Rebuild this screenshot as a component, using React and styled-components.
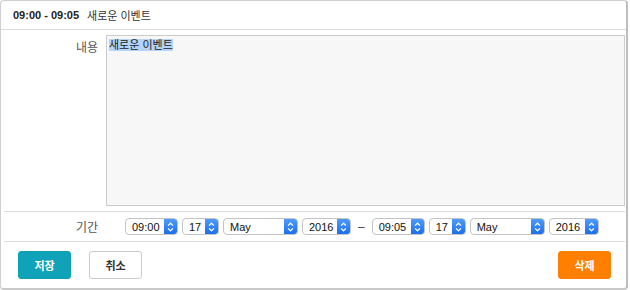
import React from "react";
import styled, { createGlobalStyle } from "styled-components";

const Global = createGlobalStyle`
  html, body { margin: 0; padding: 0; background: #fff; }
  body { font-family: "Liberation Sans", "Noto Sans CJK KR", Arial, sans-serif; }
`;

const Dialog = styled.div`
  box-sizing: border-box;
  width: 628px;
  height: 290px;
  border: 1px solid #cfcfcf;
  border-right: 2px solid #bdbdbd;
  border-bottom: 2px solid #c9c9c9;
  border-radius: 4px;
  background: #fff;
  display: flex;
  flex-direction: column;
  color: #222;
`;

const Header = styled.div`
  height: 28px;
  flex: none;
  display: flex;
  align-items: center;
  gap: 8px;
  padding-left: 12px;
  border-bottom: 1px solid #dcdcdc;
  font-size: 11px;
`;

const Time = styled.span`
  font-weight: bold;
  color: #222;
`;

const Title = styled.span`
  color: #333;
`;

const Row = styled.div`
  display: grid;
  grid-template-columns: 97px 1fr;
  column-gap: 8px;
  align-items: ${(p) => (p.$top ? "start" : "center")};
  padding: ${(p) => p.$pad};
  height: ${(p) => (p.$h ? `${p.$h}px` : "auto")};
`;

const Label = styled.div`
  text-align: right;
  font-size: 12px;
  color: #555;
  padding-top: ${(p) => p.$pt || "0"};
`;

const TextBox = styled.div`
  box-sizing: border-box;
  height: 171px;
  margin-right: 1px;
  background: #f7f7f7;
  border: 1px solid #cbcbcb;
  padding: 3px 2px;
  font-size: 11px;
  line-height: 13px;
`;

const Selected = styled.span`
  background: #b3d4fd;
  color: #222;
`;

const Divider = styled.div`
  height: 1px;
  background: #dcdcdc;
  margin: 0 1px 0 3px;
`;

const Controls = styled.div`
  display: flex;
  align-items: center;
  gap: 4px;
  padding-left: 19px;
`;

const SelectBox = styled.div`
  box-sizing: border-box;
  width: ${(p) => p.$w}px;
  height: 17px;
  display: flex;
  align-items: stretch;
  border: 1px solid #c4c4c4;
  border-radius: 4px;
  background: #fff;
  overflow: hidden;
  font-size: 11px;
`;

const SelectText = styled.div`
  flex: 1;
  padding-left: 6px;
  display: flex;
  align-items: center;
  color: #111;
`;

const Arrow = styled.div`
  width: 13px;
  flex: none;
  background: linear-gradient(#4f9bfb, #1a6ff0);
  display: flex;
  align-items: center;
  justify-content: center;
`;

const Dash = styled.span`
  font-size: 12px;
  color: #444;
  margin: 0 3px;
`;

const Footer = styled.div`
  flex: 1;
  display: flex;
  align-items: center;
  justify-content: space-between;
  padding: 0 15px 0 17px;
`;

const Group = styled.div`
  display: flex;
  gap: 18px;
`;

const Button = styled.button`
  box-sizing: border-box;
  width: 53px;
  height: 28px;
  border-radius: 3px;
  font-family: inherit;
  font-size: 11px;
  font-weight: bold;
  cursor: pointer;
  border: 1px solid ${(p) => (p.$variant === "save" ? "#0f9fb5" : p.$variant === "delete" ? "#ff8000" : "#cccccc")};
  background: ${(p) => (p.$variant === "save" ? "#10a2b8" : p.$variant === "delete" ? "#ff8000" : "#ffffff")};
  color: ${(p) => (p.$variant === "cancel" ? "#333" : "#fff")};
`;

const Chevrons = () => (
  <svg width="7" height="10" viewBox="0 0 7 10">
    <path d="M1 3.6 L3.5 1.2 L6 3.6 M1 6.4 L3.5 8.8 L6 6.4" fill="none" stroke="#fff" strokeWidth="1.2" />
  </svg>
);

const Select = ({ value, w }) => (
  <SelectBox $w={w}>
    <SelectText>{value}</SelectText>
    <Arrow>
      <Chevrons />
    </Arrow>
  </SelectBox>
);

export default function App() {
  return (
    <>
      <Global />
      <Dialog>
        <Header>
          <Time>09:00 - 09:05</Time>
          <Title>새로운 이벤트</Title>
        </Header>
        <Row $top $pad="5px 0 5px 0">
          <Label $pt="3px">내용</Label>
          <TextBox>
            <Selected>새로운 이벤트</Selected>
          </TextBox>
        </Row>
        <Divider />
        <Row $pad="0" $h={29}>
          <Label>기간</Label>
          <Controls>
            <Select value="09:00" w={53} />
            <Select value="17" w={37} />
            <Select value="May" w={75} />
            <Select value="2016" w={49} />
            <Dash>–</Dash>
            <Select value="09:05" w={53} />
            <Select value="17" w={37} />
            <Select value="May" w={75} />
            <Select value="2016" w={50} />
          </Controls>
        </Row>
        <Divider />
        <Footer>
          <Group>
            <Button $variant="save">저장</Button>
            <Button $variant="cancel">취소</Button>
          </Group>
          <Button $variant="delete">삭제</Button>
        </Footer>
      </Dialog>
    </>
  );
}
